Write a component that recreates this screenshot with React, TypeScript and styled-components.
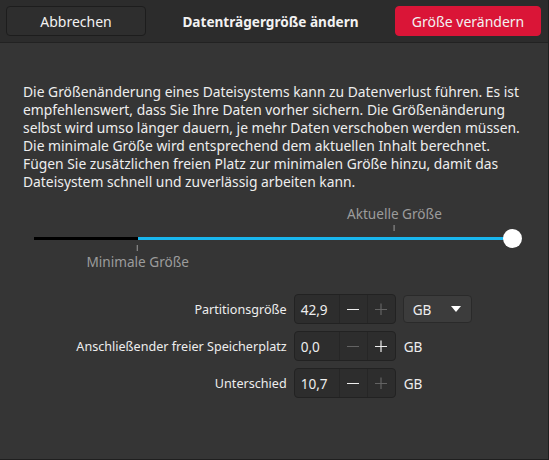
import styled, { createGlobalStyle } from 'styled-components';

const Global = createGlobalStyle`
  html, body { margin: 0; padding: 0; background: #353535; }
  body { font-family: "Noto Sans", "DejaVu Sans", sans-serif; color: #eeeeee; }
`;

const Window = styled.div`
  width: 549px;
  height: 460px;
  box-sizing: border-box;
  background: #353535;
  border-right: 1px solid #1f1f1f;
  border-bottom: 1px solid #1f1f1f;
  display: flex;
  flex-direction: column;
`;

const HeaderBar = styled.div`
  height: 43px;
  box-sizing: border-box;
  background: #2c2c2c;
  border-bottom: 1px solid #222;
  display: flex;
  align-items: center;
  justify-content: space-between;
  padding: 0 7px 0 6px;
`;

const HeadButton = styled.button<{ $danger?: boolean }>`
  width: ${(p) => (p.$danger ? '146px' : '140px')};
  height: 30px;
  border-radius: 4px;
  border: 1px solid ${(p) => (p.$danger ? '#da1537' : '#1d1d1d')};
  background: ${(p) => (p.$danger ? '#da1537' : '#2e2e2e')};
  color: #f2f2f2;
  font-family: inherit;
  font-size: 14px;
  padding: 0;
`;

const Title = styled.div`
  font-weight: bold;
  font-size: 13.6px;
  color: #f2f2f2;
`;

const Body = styled.div`
  padding: 40px 23px 0 23px;
`;

const Paragraph = styled.p`
  margin: 0;
  font-size: 13.85px;
  line-height: 18px;
  white-space: nowrap;
  color: #eeeeee;
`;

const Scale = styled.div`
  position: relative;
  height: 80px;
  margin: 15px 13px 0 11px;
`;

const Track = styled.div`
  position: absolute;
  left: 0;
  right: 0;
  top: 31px;
  height: 3px;
  background: #000;
`;

const Fill = styled.div`
  position: absolute;
  top: 31px;
  height: 3px;
  background: #19b6ee;
`;

const Knob = styled.div`
  position: absolute;
  top: 23px;
  width: 19px;
  height: 19px;
  margin-left: -9px;
  border-radius: 50%;
  background: #ffffff;
`;

const Mark = styled.div<{ $below?: boolean }>`
  position: absolute;
  top: ${(p) => (p.$below ? '39px' : '0px')};
  transform: translateX(-50%);
  display: flex;
  flex-direction: ${(p) => (p.$below ? 'column' : 'column-reverse')};
  align-items: center;
  gap: 3px;
`;

const Tick = styled.div`
  width: 1px;
  height: 6px;
  background: #9a9a9a;
`;

const MarkLabel = styled.div`
  font-size: 13.6px;
  line-height: 16px;
  color: #9c9c9c;
  white-space: nowrap;
`;

const Form = styled.div`
  display: grid;
  grid-template-columns: auto auto auto;
  justify-content: center;
  align-items: center;
  column-gap: 7px;
  row-gap: 7px;
  margin-top: 8px;
  margin-left: 0px;
`;

const Label = styled.div`
  justify-self: end;
  font-size: 12.6px;
  color: #eeeeee;
  white-space: nowrap;
`;

const Spin = styled.div`
  display: flex;
  height: 30px;
  box-sizing: border-box;
  border: 1px solid #222;
  border-radius: 4px;
  background: #2d2d2d;
  overflow: hidden;
`;

const SpinEntry = styled.div`
  width: 44px;
  display: flex;
  align-items: center;
  padding-left: 6px;
  box-sizing: border-box;
  font-size: 13.6px;
  color: #eeeeee;
`;

const SpinButton = styled.div<{ $disabled?: boolean }>`
  width: 27px;
  border-left: 1px solid #262626;
  display: flex;
  align-items: center;
  justify-content: center;
  color: ${(p) => (p.$disabled ? '#636363' : '#eeeeee')};
`;

const Unit = styled.div`
  font-size: 13.6px;
  color: #eeeeee;
  margin-left: 1px;
`;

const Dropdown = styled.div`
  width: 69px;
  height: 28px;
  box-sizing: border-box;
  border: 1px solid #2a2a2a;
  border-radius: 4px;
  background: #3c3c3c;
  display: flex;
  align-items: center;
  justify-content: space-between;
  padding: 0 10px 0 9px;
  font-size: 13.6px;
  color: #eeeeee;
`;

const Minus = () => (
  <svg width="12" height="12" viewBox="0 0 12 12">
    <line x1="0" y1="6.5" x2="12" y2="6.5" stroke="currentColor" strokeWidth="1.2" />
  </svg>
);

const Plus = () => (
  <svg width="12" height="12" viewBox="0 0 12 12">
    <line x1="0" y1="6.5" x2="12" y2="6.5" stroke="currentColor" strokeWidth="1.2" />
    <line x1="6" y1="0.5" x2="6" y2="12.5" stroke="currentColor" strokeWidth="1.2" />
  </svg>
);

const Arrow = () => (
  <svg width="10" height="6" viewBox="0 0 10 6">
    <polygon points="0,0 10,0 5,6" fill="#ffffff" />
  </svg>
);

type Row = { label: string; value: string; minus: boolean; plus: boolean; dropdown?: boolean };

const rows: Row[] = [
  { label: 'Partitionsgröße', value: '42,9', minus: true, plus: false, dropdown: true },
  { label: 'Anschließender freier Speicherplatz', value: '0,0', minus: false, plus: true },
  { label: 'Unterschied', value: '10,7', minus: true, plus: false },
];

const lines = [
  'Die Größenänderung eines Dateisystems kann zu Datenverlust führen. Es ist',
  'empfehlenswert, dass Sie Ihre Daten vorher sichern. Die Größenänderung',
  'selbst wird umso länger dauern, je mehr Daten verschoben werden müssen.',
  'Die minimale Größe wird entsprechend dem aktuellen Inhalt berechnet.',
  'Fügen Sie zusätzlichen freien Platz zur minimalen Größe hinzu, damit das',
  'Dateisystem schnell und zuverlässig arbeiten kann.',
];

export default function App() {
  const minPct = 21.7;
  const curPct = 75.4;
  return (
    <>
      <Global />
      <Window>
        <HeaderBar>
          <HeadButton>Abbrechen</HeadButton>
          <Title>Datenträgergröße ändern</Title>
          <HeadButton $danger>Größe verändern</HeadButton>
        </HeaderBar>
        <Body>
          <Paragraph>
            {lines.map((l, i) => (
              <span key={i}>
                {l}
                {i < lines.length - 1 && <br />}
              </span>
            ))}
          </Paragraph>
          <Scale>
            <Track />
            <Fill style={{ left: `${minPct}%`, right: 0 }} />
            <Knob style={{ left: '100%' }} />
            <Mark style={{ left: `${curPct}%` }}>
              <Tick />
              <MarkLabel>Aktuelle Größe</MarkLabel>
            </Mark>
            <Mark $below style={{ left: `${minPct}%` }}>
              <Tick />
              <MarkLabel>Minimale Größe</MarkLabel>
            </Mark>
          </Scale>
          <Form>
            {rows.map((r) => (
              <>
                <Label key={r.label + 'l'}>{r.label}</Label>
                <Spin key={r.label + 's'}>
                  <SpinEntry>{r.value}</SpinEntry>
                  <SpinButton $disabled={!r.minus}><Minus /></SpinButton>
                  <SpinButton $disabled={!r.plus}><Plus /></SpinButton>
                </Spin>
                {r.dropdown ? (
                  <Dropdown key={r.label + 'd'}>
                    <span>GB</span>
                    <Arrow />
                  </Dropdown>
                ) : (
                  <Unit key={r.label + 'u'}>GB</Unit>
                )}
              </>
            ))}
          </Form>
        </Body>
      </Window>
    </>
  );
}
